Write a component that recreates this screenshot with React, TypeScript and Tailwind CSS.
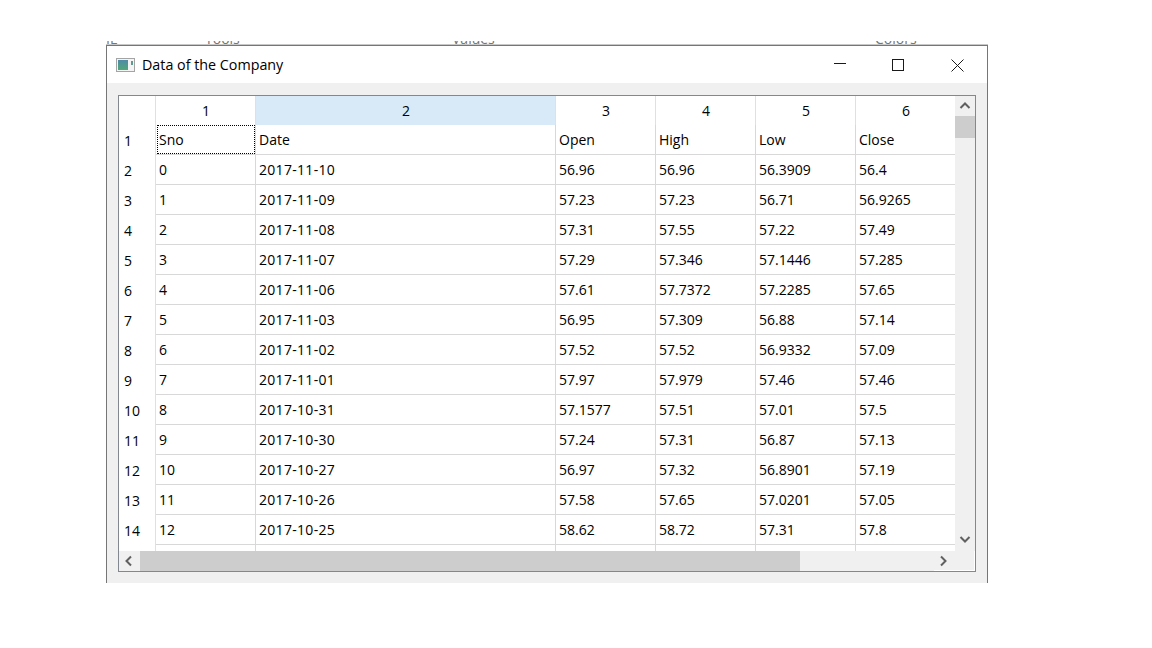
const rows = [
  ["Sno", "Date", "Open", "High", "Low", "Close"],
  ["0", "2017-11-10", "56.96", "56.96", "56.3909", "56.4"],
  ["1", "2017-11-09", "57.23", "57.23", "56.71", "56.9265"],
  ["2", "2017-11-08", "57.31", "57.55", "57.22", "57.49"],
  ["3", "2017-11-07", "57.29", "57.346", "57.1446", "57.285"],
  ["4", "2017-11-06", "57.61", "57.7372", "57.2285", "57.65"],
  ["5", "2017-11-03", "56.95", "57.309", "56.88", "57.14"],
  ["6", "2017-11-02", "57.52", "57.52", "56.9332", "57.09"],
  ["7", "2017-11-01", "57.97", "57.979", "57.46", "57.46"],
  ["8", "2017-10-31", "57.1577", "57.51", "57.01", "57.5"],
  ["9", "2017-10-30", "57.24", "57.31", "56.87", "57.13"],
  ["10", "2017-10-27", "56.97", "57.32", "56.8901", "57.19"],
  ["11", "2017-10-26", "57.58", "57.65", "57.0201", "57.05"],
  ["12", "2017-10-25", "58.62", "58.72", "57.31", "57.8"],
];

const widths = ["w-[100px]", "w-[300px]", "w-[100px]", "w-[100px]", "w-[100px]", "w-[100px]"];

function Chevron({ d }: { d: string }) {
  return (
    <svg width="12" height="12" viewBox="0 0 12 12" fill="none" stroke="#606060" strokeWidth="2">
      <path d={d} />
    </svg>
  );
}

export default function App() {
  return (
    <div className="min-h-[648px] bg-white pt-[41px] pl-[106px] font-['Open_Sans',sans-serif] text-[14px] text-black">
      <div className="w-[882px]">
        {/* window behind, mostly covered */}
        <div className="flex h-[4px] items-end overflow-hidden border-b border-[#c8c8c8] leading-[11px] text-[#777]">
          <span className="w-[99px] shrink-0">IE</span>
          <span className="w-[247px] shrink-0">Tools</span>
          <span className="w-[423px] shrink-0">Values</span>
          <span className="shrink-0">Colors</span>
        </div>
        <div className="h-[538px] border-x border-t border-[#767676] bg-[#f0f0f0]">
          {/* title bar */}
          <div className="flex h-[37px] items-center bg-white">
            <svg className="ml-[9px]" width="19" height="14" viewBox="0 0 19 14">
              <defs>
                <linearGradient id="ico" x1="0" y1="0" x2="0" y2="1">
                  <stop offset="0" stopColor="#4f8aa6" />
                  <stop offset="1" stopColor="#4fa878" />
                </linearGradient>
              </defs>
              <rect x="0.5" y="0.5" width="18" height="13" fill="#f4f4f4" stroke="#a4a4a4" />
              <rect x="2" y="2" width="10" height="10" fill="url(#ico)" />
              <rect x="15" y="3" width="2" height="4" fill="#5f9a90" />
            </svg>
            <span className="ml-[7px] flex-1 text-[14.3px]">Data of the Company</span>
            <div className="flex h-[12px] items-start">
              <svg className="mr-[46px]" width="12" height="12" viewBox="0 0 12 12" stroke="#1a1a1a">
                <path d="M0 4.5H12" />
              </svg>
              <svg className="mr-[47px]" width="12" height="12" viewBox="0 0 12 12" fill="none" stroke="#1a1a1a">
                <rect x="0.5" y="0.5" width="11" height="11" />
              </svg>
              <svg className="mr-[23px]" width="13" height="13" viewBox="0 0 13 13" stroke="#1a1a1a">
                <path d="M0.5 0.5L12.5 12.5M12.5 0.5L0.5 12.5" />
              </svg>
            </div>
          </div>

          {/* table frame */}
          <div className="mt-[12px] ml-[11px] h-[477px] w-[858px] border border-[#828790] bg-white">
            <div className="flex h-[455px]">
              <div className="h-[455px] w-[836px] overflow-hidden">
                {/* column header */}
                <div className="flex h-[29px]">
                  <div className="w-[37px] shrink-0 border-r border-[#e0e0e0]" />
                  {widths.map((w, i) => (
                    <div
                      key={i}
                      className={`${w} flex shrink-0 items-center justify-center border-r border-[#e0e0e0] pl-[1px] ${i === 1 ? "bg-[#d8e9f8]" : ""}`}
                    >
                      {i + 1}
                    </div>
                  ))}
                </div>
                {/* rows */}
                {rows.map((r, i) => (
                  <div key={i} className="flex h-[30px]">
                    <div className="flex w-[37px] shrink-0 items-center border-r border-[#e0e0e0] pl-[5px]">{i + 1}</div>
                    {r.map((c, j) => (
                      <div
                        key={j}
                        className={`${widths[j]} flex shrink-0 items-center border-r border-b border-[#d8d8d8] pl-[3px] ${j === 1 && i > 0 ? "tracking-[0.3px]" : ""}`}
                      >
                        {i === 0 && j === 0 ? (
                          <span className="-ml-[2px] flex h-[29px] w-[98px] items-center border border-dotted border-black pl-[1px]">{c}</span>
                        ) : (
                          c
                        )}
                      </div>
                    ))}
                  </div>
                ))}
                <div className="flex h-[6px]">
                  <div className="w-[37px] shrink-0 border-r border-[#e0e0e0]" />
                  {widths.map((w, i) => (
                    <div key={i} className={`${w} shrink-0 border-r border-[#d8d8d8]`} />
                  ))}
                </div>
              </div>
              {/* vertical scrollbar */}
              <div className="flex w-[20px] flex-col bg-[#f0f0f0]">
                <div className="flex h-[20px] items-center justify-center">
                  <Chevron d="M1.5 8L6 3.5L10.5 8" />
                </div>
                <div className="h-[22px] bg-[#cdcdcd]" />
                <div className="flex-1" />
                <div className="flex h-[21px] items-center justify-center pb-[3px]">
                  <Chevron d="M1.5 4L6 8.5L10.5 4" />
                </div>
              </div>
            </div>
            {/* horizontal scrollbar */}
            <div className="flex h-[20px] bg-[#f0f0f0]">
              <div className="flex w-[21px] items-center justify-center pr-[1px]">
                <Chevron d="M8 1.5L3.5 6L8 10.5" />
              </div>
              <div className="w-[660px] bg-[#cdcdcd]" />
              <div className="flex-1" />
              <div className="flex w-[41px] items-center border-r border-b border-white pl-[3px]">
                <Chevron d="M4 1.5L8.5 6L4 10.5" />
              </div>
            </div>
          </div>
        </div>
      </div>
    </div>
  );
}
